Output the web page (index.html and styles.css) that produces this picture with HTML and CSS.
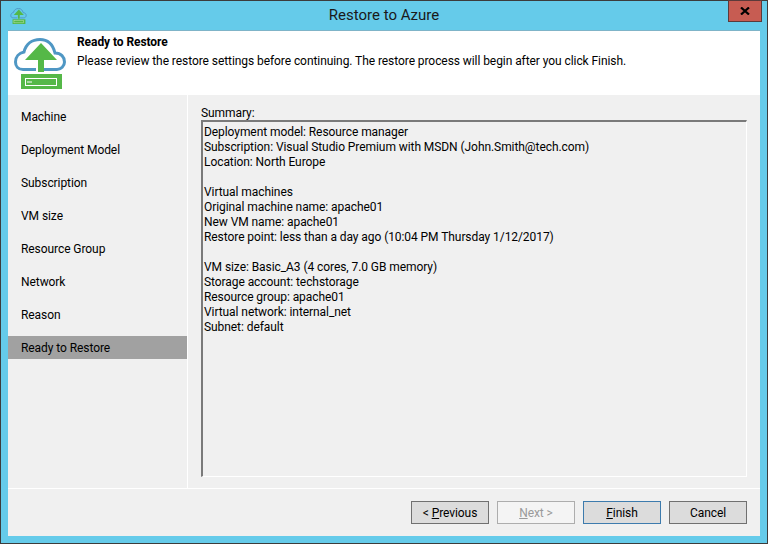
FILE: index.html
```html
<!DOCTYPE html>
<html lang="en">
<head>
<meta charset="utf-8">
<title>Restore to Azure</title>
<link rel="stylesheet" href="styles.css">
</head>
<body>
<div class="window">
  <header class="titlebar">
    <svg class="app-icon" viewBox="0 0 52 51" aria-hidden="true">
      <path class="cloud" d="M22 31.500H9C4 31.500 1.500 28 1.500 24C1.500 19 5 15 10 14C12 6 18 1.500 26 1.500C34 1.500 39 7 41 15C47 15 50.500 19 50.500 24C50.500 28 47 31.500 43 31.500H30"/>
      <path class="arrow" d="M27 5L43 22H30V34H24V22H11Z"/>
      <rect class="slab" x="7" y="36" width="41" height="15"/>
      <rect class="slot" x="11.500" y="40.500" width="31" height="7"/>
    </svg>
    <h1 class="title">Restore to Azure</h1>
    <button class="close" type="button" aria-label="Close">
      <svg viewBox="0 0 10 8" class="close-x"><path d="M1 0.500L9 7.500M9 0.500L1 7.500"/></svg>
    </button>
  </header>
  <main class="client">
    <section class="banner">
      <svg class="banner-icon" viewBox="0 0 52 51" aria-hidden="true">
        <path class="cloud" d="M22 31.500H9C4 31.500 1.500 28 1.500 24C1.500 19 5 15 10 14C12 6 18 1.500 26 1.500C34 1.500 39 7 41 15C47 15 50.500 19 50.500 24C50.500 28 47 31.500 43 31.500H30"/>
        <path class="arrow" d="M27 5L43 22H30V34H24V22H11Z"/>
        <rect class="slab" x="7" y="36" width="41" height="15"/>
        <rect class="slot" x="11.500" y="40.500" width="31" height="7"/>
        <path class="dash" d="M13 44H18"/>
      </svg>
      <div class="banner-text">
        <h2 class="banner-title">Ready to Restore</h2>
        <p class="banner-desc">Please review the restore settings before continuing. The restore process will begin after you click Finish.</p>
      </div>
    </section>
    <div class="body">
      <nav class="steps">
        <div class="step">Machine</div>
        <div class="step">Deployment Model</div>
        <div class="step">Subscription</div>
        <div class="step">VM size</div>
        <div class="step">Resource Group</div>
        <div class="step">Network</div>
        <div class="step">Reason</div>
        <div class="step step-active">Ready to Restore</div>
      </nav>
      <section class="content">
        <label class="summary-label">Summary:</label>
        <div class="summary">
          <div>Deployment model: Resource manager</div>
          <div>Subscription: Visual Studio Premium with MSDN (John.Smith@tech.com)</div>
          <div>Location: North Europe</div>
          <div class="blank"></div>
          <div>Virtual machines</div>
          <div>Original machine name: apache01</div>
          <div>New VM name: apache01</div>
          <div>Restore point: less than a day ago (10:04 PM Thursday 1/12/2017)</div>
          <div class="blank"></div>
          <div>VM size: Basic_A3 (4 cores, 7.0 GB memory)</div>
          <div>Storage account: techstorage</div>
          <div>Resource group: apache01</div>
          <div>Virtual network: internal_net</div>
          <div>Subnet: default</div>
        </div>
      </section>
    </div>
    <footer class="footer">
      <button class="btn" type="button">&lt; <u>P</u>revious</button>
      <button class="btn btn-disabled" type="button" disabled><u>N</u>ext &gt;</button>
      <button class="btn btn-default" type="button"><u>F</u>inish</button>
      <button class="btn" type="button">Cancel</button>
    </footer>
  </main>
</div>
</body>
</html>
```
FILE: styles.css
```css
* { box-sizing: border-box; }
html, body { margin: 0; height: 100%; }
body {
  font-family: Roboto, "Noto Sans", sans-serif;
  font-size: 12px;
  letter-spacing: -0.07px;
  color: #000;
  overflow: hidden;
}
.window {
  width: 768px;
  height: 544px;
  display: flex;
  flex-direction: column;
  background: #65cbea;
  border: 1px solid #3c3c3c;
  padding: 0 7px 7px;
}
.titlebar {
  height: 30px;
  flex: none;
  display: flex;
  align-items: flex-start;
  position: relative;
  border-bottom: 1px solid #7fb4c8;
}
.app-icon { width: 17px; height: 16px; margin: 7px 0 0 2px; }
.title {
  position: absolute;
  left: 0; right: 0; top: 4px;
  margin: 0;
  text-align: center;
  font-size: 15px;
  letter-spacing: 0;
  line-height: 20px;
  font-weight: 400;
  color: #1a1a1a;
}
.close {
  position: absolute;
  right: -2px; top: -1px;
  width: 34px; height: 22px;
  padding: 0;
  background: #c75c52;
  border: 1px solid #5b3a3a;
  display: flex;
  align-items: center;
  justify-content: center;
}
.close-x { width: 10px; height: 8px; }
.close-x path { stroke: #000; stroke-width: 2.200; fill: none; }
.cloud { fill: none; stroke: #4f97c4; stroke-width: 3; }
.arrow { fill: #55b848; }
.slab { fill: #55b848; }
.slot { fill: none; stroke: #fff; stroke-width: 1; }
.dash { stroke: #fff; stroke-width: 1; }
.client {
  flex: 1;
  display: flex;
  flex-direction: column;
  background: #f0f0f0;
  min-height: 0;
}
.banner {
  height: 64px;
  flex: none;
  display: flex;
  background: #fff;
}
.banner-icon { width: 52px; height: 51px; margin: 7px 0 0 6px; }
.banner-text { margin: 3px 0 0 11px; }
.banner-title { margin: 0; font-size: 12px; line-height: 16px; font-weight: 700; }
.banner-desc { margin: 3px 0 0; font-size: 12px; line-height: 16px; white-space: nowrap; }
.body {
  flex: 1;
  display: flex;
  min-height: 0;
  border-bottom: 1px solid #fff;
}
.steps {
  width: 180px;
  flex: none;
  display: flex;
  flex-direction: column;
  gap: 10px;
  padding-top: 10px;
  border-right: 1px solid #fff;
}
.step { height: 23px; line-height: 25px; padding-left: 13px; }
.step-active { background: #a1a1a1; margin-right: 0; }
.content {
  flex: 1;
  display: flex;
  flex-direction: column;
  padding: 11px 13px 11px 13px;
  min-width: 0;
}
.summary-label { line-height: 14px; height: 14px; }
.summary {
  flex: 1;
  border-style: solid;
  border-color: #7a7a7a #fff #fff #7a7a7a;
  border-width: 2px 1px 1px 2px;
  padding: 3px 1px;
  line-height: 15px;
  white-space: nowrap;
}
.blank { height: 15px; }
.footer {
  height: 47px;
  flex: none;
  display: flex;
  justify-content: flex-end;
  gap: 8px;
  padding: 12px 13px 0 0;
}
.btn {
  width: 78px;
  height: 23px;
  padding: 2px 0 0;
  font: inherit;
  letter-spacing: inherit;
  line-height: 19px;
  color: #000;
  background: #dcdcdc;
  border: 1px solid #707070;
  border-radius: 0;
}
.btn-disabled { background: #f4f4f4; border-color: #adadad; color: #9a9a9a; }
.btn-default { border-color: #3d7bad; }
```
